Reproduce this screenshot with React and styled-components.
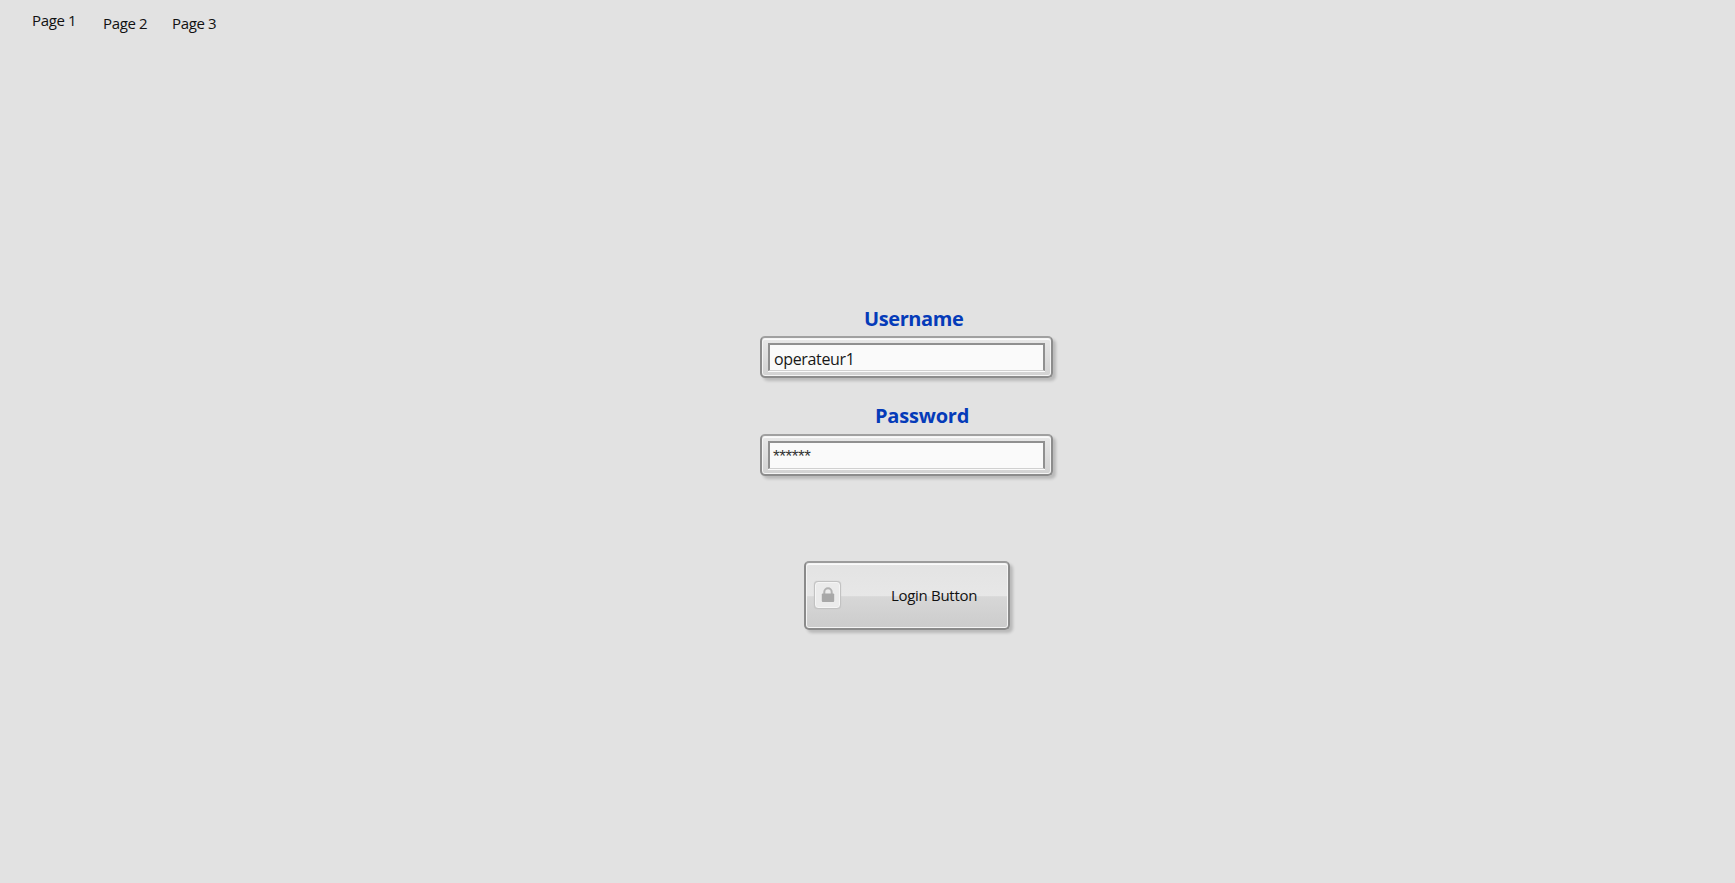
import React from "react";
import styled, { createGlobalStyle } from "styled-components";

const GlobalStyle = createGlobalStyle`
  *, *::before, *::after { box-sizing: border-box; }
  body { margin: 0; background: #e2e2e2; }
`;

const Screen = styled.div`
  height: 100vh;
  overflow: hidden;
  background: #e2e2e2;
  color: #111;
  font-family: "Open Sans", "Noto Sans", sans-serif;
  font-stretch: 92%;
  display: flex;
  flex-direction: column;
`;

const Nav = styled.nav`
  display: flex;
  align-items: flex-start;
  gap: 24px;
  height: 308px;
  padding: 10px 0 0 32px;
`;

const Tab = styled.a`
  width: ${(p) => p.$width}px;
  padding-top: ${(p) => p.$drop || 0}px;
  font-size: 15px;
  line-height: 20px;
  letter-spacing: -0.35px;
  white-space: nowrap;
`;

const Form = styled.form`
  width: 293px;
  margin-left: 760px;
  display: flex;
  flex-direction: column;
`;

const Field = styled.label`
  display: flex;
  flex-direction: column;
  height: ${(p) => p.$height}px;
`;

const Caption = styled.span`
  padding-left: ${(p) => p.$indent}px;
  padding-top: ${(p) => p.$drop || 0}px;
  height: 28px;
  line-height: 20px;
  font-size: 20px;
  font-weight: 700;
  letter-spacing: ${(p) => p.$tracking}px;
  color: #053bb9;
  white-space: nowrap;
`;

const Frame = styled.span`
  display: block;
  height: 42px;
  padding: 5px 6px 4px 6px;
  border: 2px solid #8c8c8c;
  border-top-color: #a0a0a0;
  border-radius: 5px;
  background: linear-gradient(#e8e8e8, #d2d2d2);
  box-shadow: inset 0 0 0 1px #f4f4f4, inset 0 2px 0 #fafafa, 3px 3px 3px rgba(0, 0, 0, 0.18);
`;

const Entry = styled.span`
  display: block;
  height: 28px;
  padding-left: 4px;
  border: 2px solid #909090;
  border-bottom: 1px solid #d0d0d0;
  background: #fafafa;
  box-shadow: 0 1px 0 #fafafa;
  font-size: 16px;
  line-height: 28px;
  letter-spacing: ${(p) => p.$tracking}px;
  color: #171717;
`;

const MaskedEntry = styled(Entry)`
  padding-left: 3px;
  font-family: "Liberation Sans", sans-serif;
  font-size: 17px;
  color: #333;
`;

const LoginButton = styled.button`
  display: flex;
  align-items: center;
  width: 206px;
  height: 69px;
  margin: 57px 0 0 44px;
  padding: 0 0 1px 8px;
  border: 2px solid #8a8a8a;
  border-top-color: #9c9c9c;
  border-radius: 5px;
  background: linear-gradient(#e3e3e3 0%, #e7e7e7 50%, #d7d7d7 52%, #cccccc 100%);
  box-shadow: inset 0 0 0 1px #f4f4f4, inset 0 2px 0 #fafafa, 3px 3px 3px rgba(0, 0, 0, 0.18);
  font-family: inherit;
  font-stretch: inherit;
  font-size: 15px;
  line-height: 20px;
  letter-spacing: -0.3px;
  color: #111;
  white-space: nowrap;
`;

const LockBadge = styled.span`
  display: flex;
  align-items: center;
  justify-content: center;
  width: 27px;
  height: 28px;
  margin-right: 50px;
  border: 1px solid #c2c2c2;
  border-radius: 4px;
  background: #ebebeb;
  box-shadow: inset 0 0 0 1px #f5f5f5, 0 0 1px #bbb;
`;

function LockIcon() {
  return (
    <svg width="14" height="16" viewBox="0 0 14 16">
      <path d="M3.3 7V5a3.7 3.7 0 0 1 7.4 0v2" fill="none" stroke="#b2b2b2" strokeWidth="2" />
      <rect x="0.8" y="6.5" width="12.4" height="8.5" rx="1" fill="#a8a8a8" />
    </svg>
  );
}

export default function App() {
  return (
    <>
      <GlobalStyle />
      <Screen>
        <Nav>
          <Tab $width={47}>Page 1</Tab>
          <Tab $width={45} $drop={3}>Page 2</Tab>
          <Tab $width={45} $drop={3}>Page 3</Tab>
        </Nav>
        <Form>
          <Field $height={98}>
            <Caption $indent={104} $tracking={-0.4} $drop={1}>Username</Caption>
            <Frame><Entry $tracking={-0.35}>operateur1</Entry></Frame>
          </Field>
          <Field $height={98}>
            <Caption $indent={115} $tracking={-0.2}>Password</Caption>
            <Frame><MaskedEntry $tracking={-0.35}>******</MaskedEntry></Frame>
          </Field>
          <LoginButton type="button">
            <LockBadge><LockIcon /></LockBadge>
            Login Button
          </LoginButton>
        </Form>
      </Screen>
    </>
  );
}
